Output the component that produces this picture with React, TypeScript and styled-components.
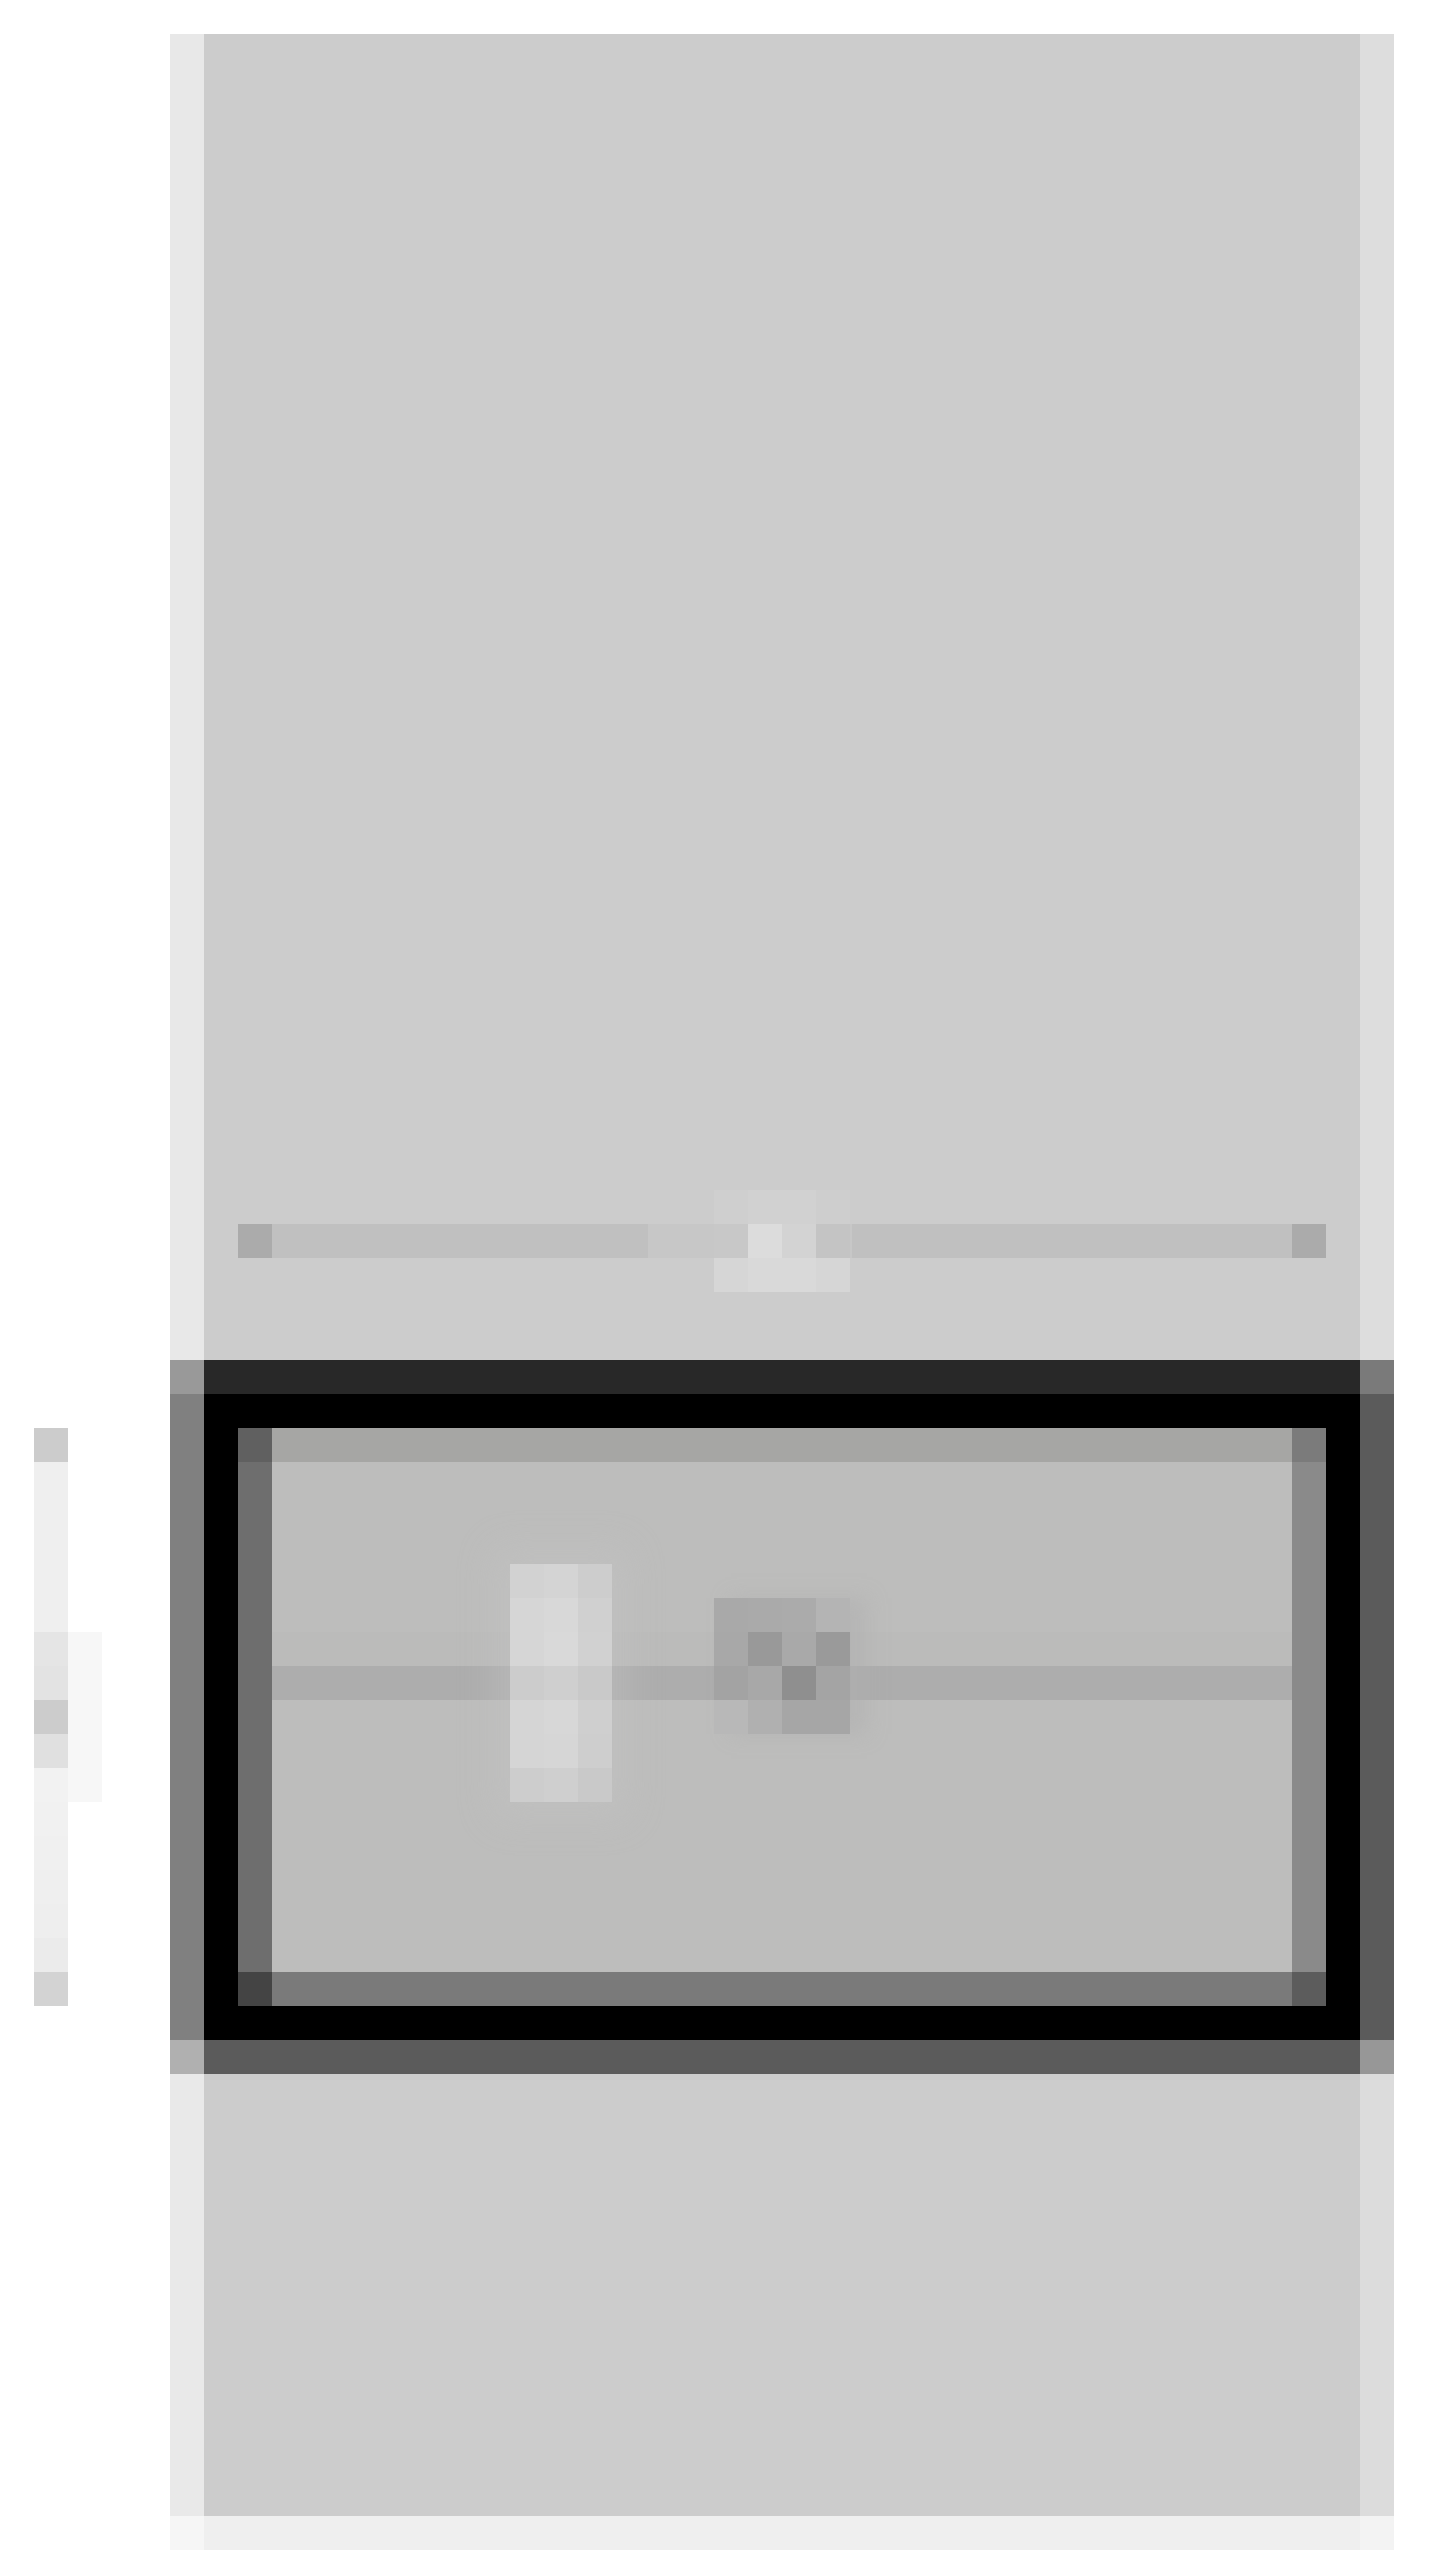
import styled, { createGlobalStyle } from 'styled-components';

const U = 34;

const GlobalStyle = createGlobalStyle`
  html, body {
    margin: 0;
    padding: 0;
    background: #ffffff;
    font-family: 'Liberation Sans', Arial, sans-serif;
  }
`;

const Page = styled.div`
  display: flex;
  align-items: flex-start;
  padding-top: ${U}px;
  min-height: 2560px;
  box-sizing: border-box;
`;

const Gutter = styled.div`
  width: ${5 * U}px;
  padding-left: ${U}px;
  padding-top: ${41 * U}px;
  box-sizing: border-box;
  display: flex;
  align-items: flex-start;
`;

const GaugeBar = styled.div`
  display: flex;
  flex-direction: column;
  width: ${U}px;
`;

const GaugeCell = styled.div<{ $c: string }>`
  height: ${U}px;
  background: ${(p) => p.$c};
`;

const GaugeGlow = styled.div`
  width: ${U}px;
  height: ${5 * U}px;
  margin-top: ${6 * U}px;
  background: #f7f7f7;
`;

const Panel = styled.div`
  width: ${36 * U}px;
  display: flex;
  flex-direction: column;
`;

const Band = styled.div<{ $h: number; $left: string; $mid: string; $right: string }>`
  display: grid;
  grid-template-columns: ${U}px 1fr ${U}px;
  height: ${(p) => p.$h}px;
  background: ${(p) => p.$mid};

  &::before,
  &::after {
    content: '';
  }
  &::before {
    grid-column: 1;
    grid-row: 1;
    background: ${(p) => p.$left};
  }
  &::after {
    grid-column: 3;
    grid-row: 1;
    background: ${(p) => p.$right};
  }
`;

const BandBody = styled.div`
  grid-column: 2;
  grid-row: 1;
  min-width: 0;
  position: relative;
`;

const SliderArea = styled(BandBody)`
  display: flex;
  flex-direction: column;
  justify-content: flex-end;
  padding: 0 ${U}px ${3 * U}px;
`;

const Track = styled.div`
  position: relative;
  height: ${U}px;
  display: grid;
  grid-template-columns: ${U}px 1fr ${U}px;
  background: #c0c0c0;

  &::before,
  &::after {
    content: '';
    background: #ababab;
  }
  &::after {
    grid-column: 3;
  }
`;

const TrackGap = styled.div`
  position: absolute;
  top: 0;
  bottom: 0;
  left: ${13 * U - 32}px;
  width: ${6 * U}px;
  background: #c7c7c7;
`;

const KnobGrid = styled.div`
  position: absolute;
  left: ${14 * U}px;
  top: ${-U}px;
  width: ${4 * U}px;
  height: ${3 * U}px;
  display: grid;
  grid-template-columns: repeat(4, 1fr);
  grid-template-rows: repeat(3, 1fr);
`;

const Px = styled.div<{ $c: string }>`
  background: ${(p) => p.$c};
`;

const Frame = styled(BandBody)`
  background: #000000;
  padding: ${U}px;
  display: flex;
`;

const Screen = styled.div`
  flex: 1;
  display: grid;
  grid-template-columns: ${U}px 1fr ${U}px;
  grid-template-rows: ${U}px 1fr ${U}px;
`;

const Edge = styled.div<{ $c: string }>`
  background: ${(p) => p.$c};
`;

const Display = styled.div`
  position: relative;
  background: #bdbdbc;
  display: flex;
  flex-direction: column;
  padding-top: ${5 * U}px;
`;

const ScanLine = styled.div<{ $c: string }>`
  height: ${U}px;
  background: ${(p) => p.$c};
`;

const Handle = styled.div`
  position: absolute;
  left: ${7 * U}px;
  top: ${3 * U}px;
  width: ${3 * U}px;
  height: ${7 * U}px;
  display: grid;
  grid-template-columns: repeat(3, 1fr);
  grid-template-rows: repeat(7, 1fr);
  box-shadow: 0 0 ${U}px ${U / 2}px rgba(196, 196, 196, 0.45);
`;

const Marker = styled.div`
  position: absolute;
  left: ${13 * U}px;
  top: ${4 * U}px;
  width: ${4 * U}px;
  height: ${4 * U}px;
  display: grid;
  grid-template-columns: repeat(4, 1fr);
  grid-template-rows: repeat(4, 1fr);
  box-shadow: ${U / 2}px 0 ${U / 2}px rgba(176, 176, 176, 0.5);
`;

const gauge = [
  '#cccccc', '#efefef', '#efefef', '#efefef', '#efefef', '#efefef',
  '#e5e5e5', '#e3e3e3', '#cccccc', '#e0e0e0', '#f2f2f2', '#f1f1f1',
  '#f0f0f0', '#efefef', '#eeeeee', '#ebebeb', '#d3d3d3',
];

const knob = [
  '#cfcfcf', '#d1d1d1', '#d1d1d1', '#cecece',
  '#c8c8c8', '#dcdcdc', '#d3d3d3', '#c4c4c4',
  '#d6d6d6', '#d9d9d9', '#d9d9d9', '#d6d6d6',
];

const handle = [
  '#d2d2d2', '#d4d4d4', '#cdcdcd',
  '#d6d6d6', '#d8d8d8', '#d0d0d0',
  '#d6d6d6', '#d9d9d9', '#d1d1d1',
  '#cccccc', '#cfcfcf', '#c9c9c9',
  '#d5d5d5', '#d7d7d7', '#cfcfcf',
  '#d5d5d5', '#d6d6d6', '#cecece',
  '#cdcdcd', '#cfcfcf', '#c9c9c9',
];

const marker = [
  '#a9a9a9', '#aaaaaa', '#ababab', '#b4b4b4',
  '#a8a8a8', '#999999', '#a9a9a9', '#9a9a9a',
  '#a3a3a3', '#a8a8a8', '#8f8f8f', '#a4a4a4',
  '#b8b8b8', '#b0b0b0', '#a6a6a6', '#a6a6a6',
];

export default function App() {
  return (
    <>
      <GlobalStyle />
      <Page>
        <Gutter>
          <GaugeBar>
            {gauge.map((c, i) => (
              <GaugeCell key={i} $c={c} />
            ))}
          </GaugeBar>
          <GaugeGlow />
        </Gutter>

        <Panel>
          <Band $h={39 * U} $left="#e8e8e8" $mid="#cccccc" $right="#dddddd">
            <SliderArea>
              <Track>
                <TrackGap />
                <KnobGrid>
                  {knob.map((c, i) => (
                    <Px key={i} $c={c} />
                  ))}
                </KnobGrid>
              </Track>
            </SliderArea>
          </Band>

          <Band $h={U} $left="#999999" $mid="#282828" $right="#7a7a7a" />

          <Band $h={19 * U} $left="#808080" $mid="#000000" $right="#5b5b5b">
            <Frame>
              <Screen>
                <Edge $c="#606060" />
                <Edge $c="#a6a6a4" />
                <Edge $c="#7b7b7b" />
                <Edge $c="#6e6e6e" />
                <Display>
                  <ScanLine $c="#bbbbba" />
                  <ScanLine $c="#adadad" />
                  <Handle>
                    {handle.map((c, i) => (
                      <Px key={i} $c={c} />
                    ))}
                  </Handle>
                  <Marker>
                    {marker.map((c, i) => (
                      <Px key={i} $c={c} />
                    ))}
                  </Marker>
                </Display>
                <Edge $c="#8a8a8a" />
                <Edge $c="#444444" />
                <Edge $c="#7a7a7a" />
                <Edge $c="#5c5c5c" />
              </Screen>
            </Frame>
          </Band>

          <Band $h={U} $left="#b0b0b0" $mid="#5b5b5b" $right="#979797" />
          <Band $h={13 * U} $left="#e9e9e9" $mid="#cccccc" $right="#dcdcdc" />
          <Band $h={U} $left="#f6f6f6" $mid="#efefef" $right="#f3f3f3" />
        </Panel>
      </Page>
    </>
  );
}
